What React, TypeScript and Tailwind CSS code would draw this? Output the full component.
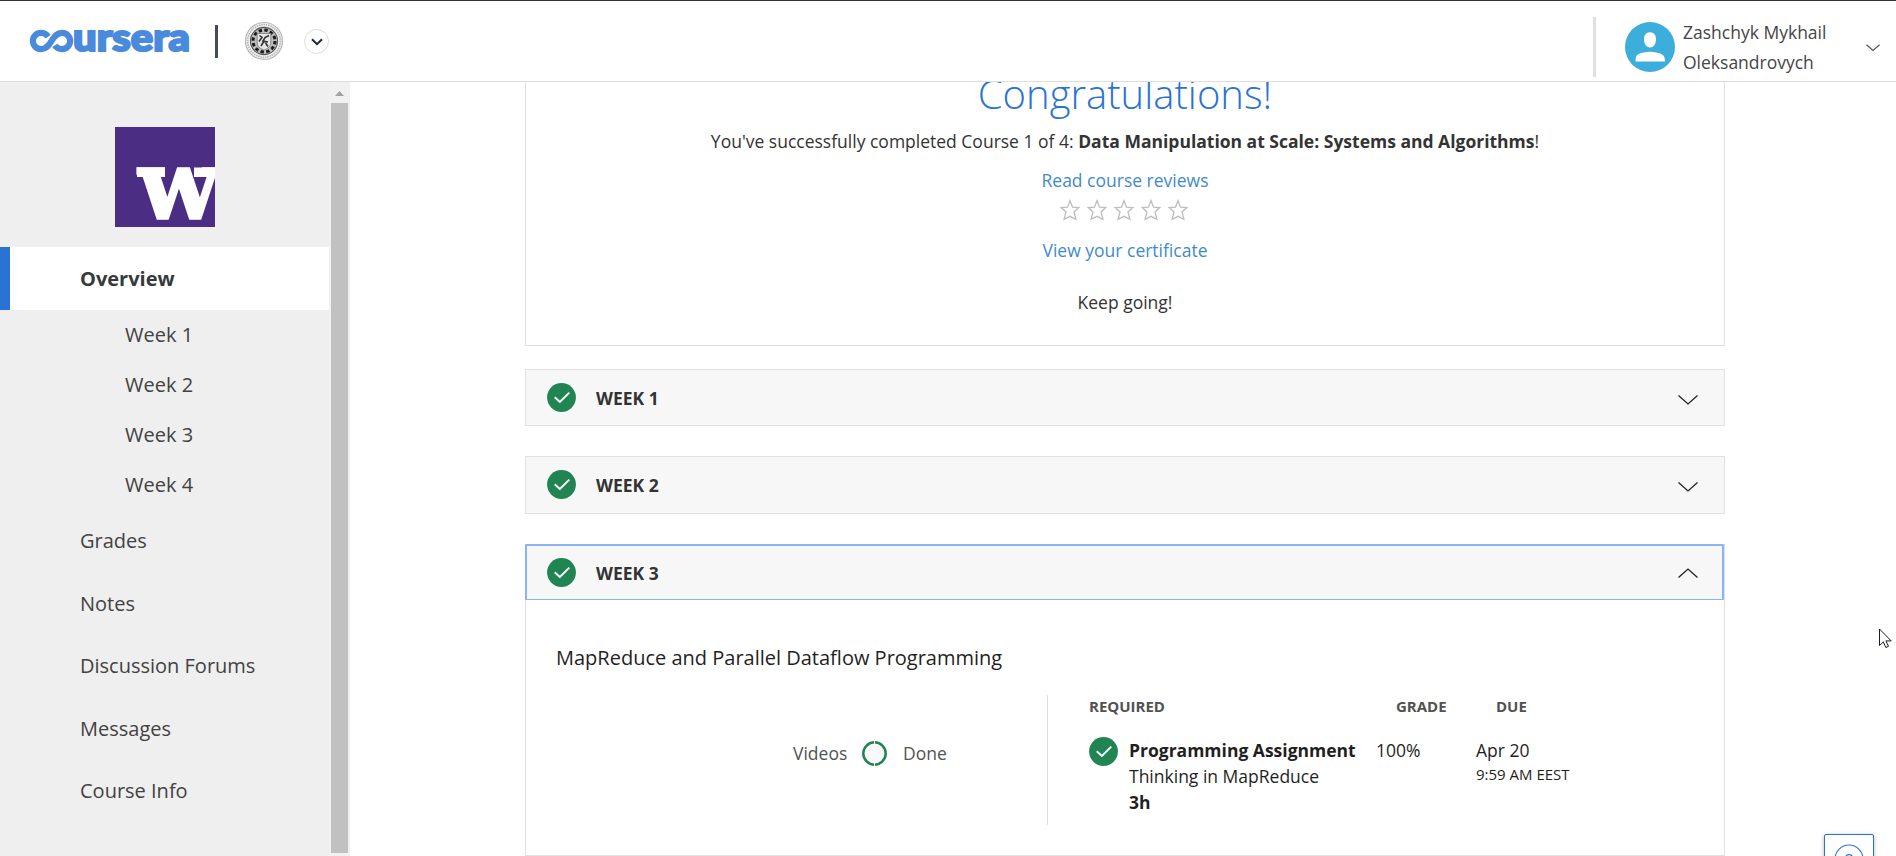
import React from "react";

const weeks = ["Week 1", "Week 2", "Week 3", "Week 4"];
const links = ["Grades", "Notes", "Discussion Forums", "Messages", "Course Info"];

function CourseraLogo() {
  return (
    <svg width="162" height="26" viewBox="0 0 162 26" className="block overflow-visible" aria-label="coursera">
      <path
        d="M19.200 8.600C17.300 6 14.800 4.900 12 4.900A8.100 8.100 0 0 0 12 21.100C17 21.100 19.500 18 22.500 13C25.500 8 28 4.900 33 4.900A8.100 8.100 0 0 1 33 21.100C30 21.100 27.500 20 25.800 17.400"
        fill="none"
        stroke="#4a8adc"
        strokeWidth="6.200"
      />
      <text
        x="44"
        y="22.900"
        textLength="117"
        lengthAdjust="spacingAndGlyphs"
        fill="#4a8adc"
        stroke="#4a8adc"
        strokeWidth="2.200"
        fontFamily="Lato, sans-serif"
        fontWeight="900"
        fontSize="38.500"
      >
        ursera
      </text>
    </svg>
  );
}

function Seal() {
  return (
    <svg width="40" height="40" viewBox="0 0 40 40" className="block">
      <circle cx="20" cy="20" r="18.500" fill="#f4f4f4" stroke="#b5b5b5" strokeWidth="1.200" />
      <circle cx="20" cy="20" r="16.300" fill="none" stroke="#b9b9b9" strokeWidth="1.800" strokeDasharray="1.500 0.800" />
      <circle cx="20" cy="20" r="13.600" fill="#bdbdbd" stroke="#555" strokeWidth="1.100" />
      <circle cx="20" cy="20" r="11" fill="none" stroke="#1c1c1c" strokeWidth="3" strokeDasharray="3.400 2.360" />
      <path d="M13.200 12.500h13.600v9.500c0 3-2.500 5.500-6.800 7c-4.300-1.500-6.800-4-6.800-7z" fill="#e6e6e6" stroke="#777" strokeWidth="0.800" />
      <path d="M15.500 14.500l2.500 2l-3 4M25 14.500l-4 2l-2 3.500l5 1M20 20l-3 5M21.500 22l2.500 3.500" fill="none" stroke="#333" strokeWidth="1.600" />
    </svg>
  );
}

function Check() {
  return (
    <svg width="29" height="29" viewBox="0 0 29 29" className="block shrink-0">
      <circle cx="14.500" cy="14.500" r="14.400" fill="#208553" />
      <path d="M7.700 14.200L12.900 19L22.300 9.600" fill="none" stroke="#fff" strokeWidth="1.900" />
    </svg>
  );
}

function Chevron({ up = false }: { up?: boolean }) {
  return (
    <svg width="20" height="10" viewBox="0 0 20 10" className="block">
      <path d={up ? "M0.500 9.500L10 1L19.500 9.500" : "M0.500 0.500L10 9L19.500 0.500"} fill="none" stroke="#222" strokeWidth="1.300" />
    </svg>
  );
}

function Star() {
  return (
    <svg width="22" height="22" viewBox="0 0 22 22" className="block">
      <path
        d="M11 1.600L13.500 8.200L19.800 8.500L15 12.900L16.900 20.300L11 17.300L5.100 20.300L7 12.900L2.200 8.500L8.500 8.200Z"
        fill="none"
        stroke="#bdbdbd"
        strokeWidth="1.300"
      />
    </svg>
  );
}

function Header() {
  return (
    <header className="flex h-[82px] shrink-0 border-t border-b border-t-[#333] border-b-[#dedede] bg-white">
      <div className="flex w-full items-start">
        <div className="ml-[29px] mt-[27px]"><CourseraLogo /></div>
        <div className="ml-6 mt-6 h-[33px] w-[3px] bg-[#454c57]" />
        <div className="ml-[26px] mt-5"><Seal /></div>
        <div className="ml-5 mt-7 flex h-[25px] w-[25px] items-center justify-center rounded-full border border-[#dcdcdc]">
          <svg width="12" height="8" viewBox="0 0 12 8">
            <path d="M1 1.300L6 6.200L11 1.300" fill="none" stroke="#1f2733" strokeWidth="2" />
          </svg>
        </div>
        <div className="ml-auto mt-4 h-[60px] w-[3px] bg-[#e0e0e0]" />
        <div className="ml-[29px] mt-[21px]">
          <svg width="50" height="50" viewBox="0 0 50 50" className="block">
            <circle cx="25" cy="25" r="25" fill="#3daedb" />
            <path d="M25 10.300c3.800 0 6 2.800 6 7.200c0 4.600-2.700 8-6 8s-6-3.400-6-8c0-4.400 2.200-7.200 6-7.200z" fill="#fff" />
            <path d="M10.500 39.500c0-4.500.8-6.600 3.200-7.600c3-1.200 7-2.200 11.300-2.200s8.300 1 11.300 2.200c2.400 1 3.700 3.100 3.700 7.600z" fill="#fff" />
          </svg>
        </div>
        <div className="ml-2 mt-4 w-[183px] text-[17.500px] leading-[30px] text-[#454545]">
          <div>Zashchyk Mykhail</div>
          <div>Oleksandrovych</div>
        </div>
        <svg width="14" height="8" viewBox="0 0 14 8" className="mr-4 mt-[43px] block">
          <path d="M0.500 0.800L7 6.500L13.500 0.800" fill="none" stroke="#555" strokeWidth="1.200" />
        </svg>
      </div>
    </header>
  );
}

function Sidebar() {
  return (
    <aside className="flex w-[350px] shrink-0 bg-[#efefef]">
      <nav className="w-[329px] text-[20px] text-[#424242]">
        <div className="flex h-[165px] pl-[115px] pt-[45px]">
          <svg width="100" height="100" viewBox="0 0 100 100" className="block">
            <rect width="100" height="100" fill="#4b2e83" />
            <rect x="22" y="40.500" width="28" height="9.500" fill="#fff" />
            <rect x="79" y="40.500" width="21" height="9.500" fill="#fff" />
            <text
              x="24"
              y="91.300"
              textLength="80"
              lengthAdjust="spacingAndGlyphs"
              fill="#fff"
              stroke="#fff"
              strokeWidth="3.600"
              fontFamily="DejaVu Serif, serif"
              fontWeight="700"
              fontSize="67"
            >
              W
            </text>
          </svg>
        </div>
        <div className="flex h-[63px] items-center border-l-[10px] border-[#2a73d2] bg-white pl-[70px] font-bold text-[#373a3c]">
          Overview
        </div>
        {weeks.map((w) => (
          <div key={w} className="flex h-[50px] items-center pl-[125px]">{w}</div>
        ))}
        {links.map((l) => (
          <div key={l} className="flex h-[62.500px] items-center pl-20">{l}</div>
        ))}
      </nav>
      <div className="flex w-[21px] flex-col items-center bg-[#f1f1f1]">
        <svg width="9" height="5" viewBox="0 0 9 5" className="mt-[9px] block">
          <path d="M0 5L4.500 0L9 5z" fill="#a3a3a3" />
        </svg>
        <div className="mt-[7px] h-[750px] w-[17px] bg-[#c1c1c1]" />
      </div>
    </aside>
  );
}

function CompletionCard() {
  return (
    <section className="-mt-5 flex h-[284px] flex-col items-center border border-[#e1e1e1] text-[17.500px] leading-[30px] text-[#333]">
      <h1 className="pt-px text-[40px] font-light leading-[60px] text-[#2a73d2]">Congratulations!</h1>
      <p className="h-[34px] leading-[34px]">
        You've successfully completed Course 1 of 4:{" "}
        <b className="font-bold">Data Manipulation at Scale: Systems and Algorithms</b>!
      </p>
      <a className="mt-[7px] text-[#428bca]">Read course reviews</a>
      <div className="mt-[3px] mr-0.5 flex h-6 items-center gap-[5px]">
        {[1, 2, 3, 4, 5].map((n) => <Star key={n} />)}
      </div>
      <a className="mt-[13px] text-[#428bca]">View your certificate</a>
      <p className="mt-[22px]">Keep going!</p>
    </section>
  );
}

function WeekBar({ title, size, open = false }: { title: string; size: string; open?: boolean }) {
  return (
    <div className={`flex items-center bg-[#f7f7f7] text-[17.500px] font-bold text-[#333] ${size}`}>
      <Check />
      <span className="ml-5 mt-px">{title}</span>
      <span className={open ? "ml-auto" : "ml-auto mt-[5px]"}><Chevron up={open} /></span>
    </div>
  );
}

function WeekThree() {
  return (
    <section className="mt-[30px] h-[312px] border border-[#e1e1e1] border-t-0">
      <WeekBar
        title="WEEK 3"
        open
        size="-ml-px h-14 border-2 border-b border-[#8ab4f8] pl-5 pr-6 rounded-t-[1px]"
      />
      <h2 className="ml-[30px] mt-[43px] text-[20px] leading-[30px] text-[#1f1f1f]">
        MapReduce and Parallel Dataflow Programming
      </h2>
      <div className="mt-[22px] flex h-[130px]">
        <div className="flex h-[116px] w-[521px] items-center pl-[267px] text-[17.500px] text-[#525252]">
          <span className="w-[69px]">Videos</span>
          <svg width="25" height="25" viewBox="0 0 25 25" className="block">
            <circle cx="12.500" cy="12.500" r="11.200" fill="#f9f9f9" stroke="#208553" strokeWidth="2.500" />
            <path d="M12.500 0v3M12.500 21.500v3.500" stroke="#fff" strokeWidth="1" />
          </svg>
          <span className="ml-4">Done</span>
        </div>
        <div className="w-px bg-[#dcdcdc]" />
        <div className="pl-[41px] text-[17.500px] leading-[26px] text-[#1f1f1f]">
          <div className="flex pt-px text-[15px] leading-[20px] font-bold text-[#525252]">
            <span className="w-[307px]">REQUIRED</span>
            <span className="w-[100px]">GRADE</span>
            <span>DUE</span>
          </div>
          <div className="mt-[21px] flex">
            <div className="w-10"><Check /></div>
            <div className="w-[247px]">
              <div className="font-bold">Programming Assignment</div>
              <div>Thinking in MapReduce</div>
              <div className="font-bold">3h</div>
            </div>
            <div className="w-[100px]">100%</div>
            <div>
              <div>Apr 20</div>
              <div className="text-[15px] leading-[22px]">9:59 AM EEST</div>
            </div>
          </div>
        </div>
      </div>
    </section>
  );
}

export default function App() {
  return (
    <div
      className="relative flex h-[856px] w-[1896px] flex-col overflow-hidden whitespace-nowrap bg-white"
      style={{ fontFamily: '"Open Sans", sans-serif' }}
    >
      <Header />
      <div className="flex h-[774px]">
        <Sidebar />
        <main className="ml-[175px] h-[774px] w-[1200px] overflow-hidden">
          <CompletionCard />
          <div className="mt-[23px]">
            <WeekBar title="WEEK 1" size="h-[57px] border border-[#e1e1e1] pl-[21px] pr-[26px]" />
          </div>
          <div className="mt-[30px]">
            <WeekBar title="WEEK 2" size="h-[58px] border border-[#e1e1e1] pl-[21px] pr-[26px] pb-px" />
          </div>
          <WeekThree />
        </main>
      </div>
      <div className="absolute left-[1824px] top-[834px] h-[50px] w-[50px] rounded-[2px] border border-[#2a73d2] bg-white shadow-[0_1px_4px_rgba(0,0,0,0.3)]">
        <svg width="48" height="48" viewBox="0 0 48 48" className="block">
          <circle cx="24" cy="24" r="14" fill="none" stroke="#2a73d2" strokeWidth="1.200" />
          <path d="M20.500 23c0-2.300 1.500-3.300 3.500-3.300s3.500 1 3.500 3.300" fill="none" stroke="#2a73d2" strokeWidth="1.200" />
        </svg>
      </div>
      <svg width="14" height="21" viewBox="0 0 14 21" className="absolute left-[1879px] top-[628px]">
        <path d="M0.500 1v16.500l3.800-3.600l2.600 5.600l2.600-1.200l-2.600-5.400h5.300z" fill="#fff" stroke="#1a1a2a" strokeWidth="1" />
      </svg>
    </div>
  );
}
